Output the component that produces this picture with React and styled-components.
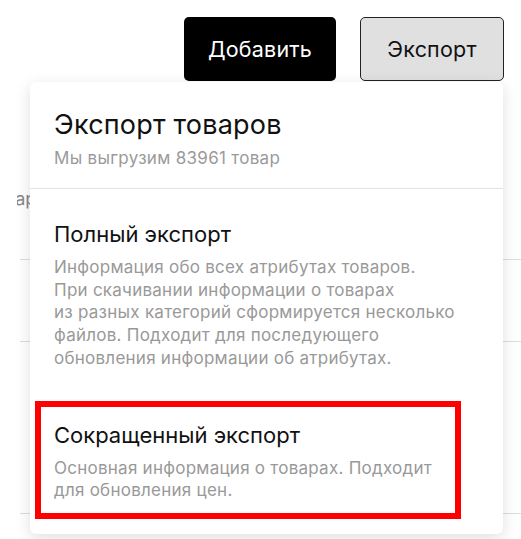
import React from 'react';
import styled, { createGlobalStyle } from 'styled-components';

const GlobalStyle = createGlobalStyle`
  html, body {
    margin: 0;
    padding: 0;
    background: #fff;
  }
  body {
    font-family: Inter, 'Noto Sans', sans-serif;
    color: #111;
  }
`;

const Page = styled.div`
  position: relative;
  width: 521px;
  height: 539px;
  overflow: hidden;
`;

const Toolbar = styled.div`
  display: flex;
  justify-content: flex-end;
  gap: 24px;
  padding: 17px 17px 0 0;
`;

const Button = styled.button`
  height: 64px;
  width: ${({ $width }) => $width}px;
  border-radius: 5px;
  font-family: inherit;
  font-size: 21.5px;
  letter-spacing: 0.2px;
  cursor: pointer;
  background: ${({ $primary }) => ($primary ? '#000' : '#e0e0e0')};
  color: ${({ $primary }) => ($primary ? '#fff' : '#111')};
  border: ${({ $primary }) => ($primary ? 'none' : '1.5px solid #222')};
`;

const Table = styled.div`
  margin: 107px 0 0 17px;
  overflow: hidden;
`;

const HeaderCell = styled.div`
  height: 60px;
  margin-left: -33px;
  font-size: 18px;
  color: #888;
`;

const Row = styled.div`
  height: ${({ $h }) => $h}px;
  margin-left: 3px;
  border-bottom: 1.5px solid #ddd;
`;

const Dropdown = styled.div`
  position: absolute;
  top: 82px;
  left: 30px;
  width: 473px;
  background: #fff;
  border-radius: 6px;
  box-shadow: 0 4px 16px rgba(0, 0, 0, 0.13);
  padding-bottom: 15px;
`;

const Header = styled.div`
  padding: 27px 24px 20px;
  border-bottom: 1px solid #e2e2e2;
`;

const Title = styled.div`
  font-size: 27px;
  line-height: 32px;
  letter-spacing: 0.2px;
  color: #111;
`;

const Subtitle = styled.div`
  margin-top: 7px;
  font-size: 17px;
  line-height: 20px;
  letter-spacing: 0.3px;
  color: #9a9a9a;
`;

const Option = styled.div`
  padding: ${({ $highlight }) => ($highlight ? '14px 13px 11px' : '31px 24px 0')};
  ${({ $highlight }) =>
    $highlight &&
    `
    margin: 31px 0 0 5px;
    width: 388px;
    border: 6px solid #ff0000;
  `}
`;

const OptionTitle = styled.div`
  font-size: 22px;
  line-height: 28px;
  color: #111;
`;

const OptionText = styled.div`
  margin-top: 8px;
  font-size: 17px;
  line-height: 22.7px;
  letter-spacing: 0.25px;
  color: #999;
`;

export default function App() {
  return (
    <Page>
      <GlobalStyle />
      <Toolbar>
        <Button $primary $width={152}>Добавить</Button>
        <Button $width={144}>Экспорт</Button>
      </Toolbar>
      <Table>
        <HeaderCell>Товар</HeaderCell>
        <Row $h={11} />
        <Row $h={81} />
        <Row $h={171} />
      </Table>
      <Dropdown>
        <Header>
          <Title>Экспорт товаров</Title>
          <Subtitle>Мы выгрузим 83961 товар</Subtitle>
        </Header>
        <Option>
          <OptionTitle>Полный экспорт</OptionTitle>
          <OptionText>
            Информация обо всех атрибутах товаров.
            <br />
            При скачивании информации о товарах
            <br />
            из разных категорий сформируется несколько
            <br />
            файлов. Подходит для последующего
            <br />
            обновления информации об атрибутах.
          </OptionText>
        </Option>
        <Option $highlight>
          <OptionTitle>Сокращенный экспорт</OptionTitle>
          <OptionText>
            Основная информация о товарах. Подходит
            <br />
            для обновления цен.
          </OptionText>
        </Option>
      </Dropdown>
    </Page>
  );
}
